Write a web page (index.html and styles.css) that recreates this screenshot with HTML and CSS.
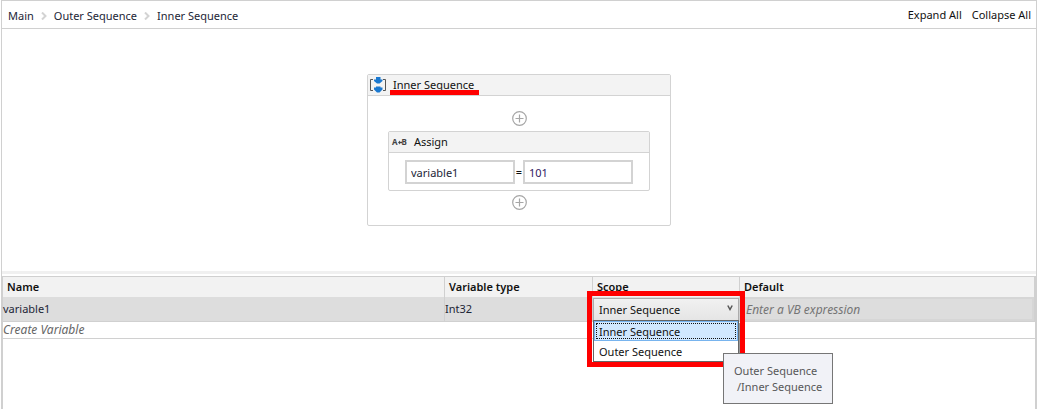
FILE: index.html
```html
<!DOCTYPE html>
<html lang="en">
<head>
<meta charset="utf-8">
<title>Workflow designer</title>
<link rel="stylesheet" href="styles.css">
</head>
<body>
<div class="designer">
  <header class="topbar">
    <nav class="crumbs" aria-label="Breadcrumb">
      <a href="#">Main</a>
      <svg class="chevron" viewBox="0 0 6 8"><path d="M1 0.5 4.5 4 1 7.5"/></svg>
      <a href="#">Outer Sequence</a>
      <svg class="chevron" viewBox="0 0 6 8"><path d="M1 0.5 4.5 4 1 7.5"/></svg>
      <a href="#">Inner Sequence</a>
    </nav>
    <div class="actions">
      <button type="button">Expand All</button>
      <button type="button">Collapse All</button>
    </div>
  </header>

  <main class="canvas">
    <section class="sequence">
      <h2 class="card-title">
        <svg class="seq-icon" viewBox="0 0 18 16">
          <path class="bracket" d="M3 2.500H0.500V13.500H3M13 2.500H15.500V13.500H13"/>
          <path class="arrow" d="M6 0H10.500V2.500H12.500V4L9.500 6.500H7L4 4V2.500H6ZM6 9.500H10.500V10.500H12.500V12.500L9.500 15.500H7L4 12.500V10.500H6Z"/>
        </svg>
        <span class="marked">Inner Sequence</span>
      </h2>
      <div class="sequence-body">
        <button type="button" class="add" aria-label="Add activity before"><svg viewBox="0 0 15 15"><circle cx="7.500" cy="7.500" r="6.800"/><path d="M7.500 3.500V11.500M3.500 7.500H11.500"/></svg></button>
        <section class="assign">
          <h3 class="card-title assign-title"><span class="ab-icon">A<svg viewBox="0 0 5 5"><path d="M0 2.500 2.500 0V1.500H5V3.500H2.500V5Z"/></svg>B</span>Assign</h3>
          <div class="assign-body">
            <input type="text" value="variable1" aria-label="To">
            <span class="equals">=</span>
            <input type="text" class="value" value="101" aria-label="Value">
          </div>
        </section>
        <button type="button" class="add" aria-label="Add activity after"><svg viewBox="0 0 15 15"><circle cx="7.500" cy="7.500" r="6.800"/><path d="M7.500 3.500V11.500M3.500 7.500H11.500"/></svg></button>
      </div>
    </section>
  </main>

  <div class="splitter"></div>

  <section class="variables">
    <table>
      <colgroup><col><col class="col-type"><col class="col-scope"><col class="col-default"></colgroup>
      <thead>
        <tr><th>Name</th><th>Variable type</th><th>Scope</th><th>Default</th></tr>
      </thead>
      <tbody>
        <tr class="selected">
          <td>variable1</td>
          <td>Int32</td>
          <td class="scope-cell">
            <div class="combo">
              <select aria-label="Scope"><option>Inner Sequence</option><option>Outer Sequence</option></select>
              <svg class="combo-arrow" viewBox="0 0 6 6"><path d="M0.800 0.500 3 4.500 5.200 0.500"/></svg>
            </div>
            <ul class="menu">
              <li class="active">Inner Sequence</li>
              <li>Outer Sequence</li>
            </ul>
            <div class="highlight"></div>
            <div class="tooltip" role="tooltip">Outer Sequence<br><span>/Inner Sequence</span></div>
          </td>
          <td class="default-cell"><input type="text" placeholder="Enter a VB expression" aria-label="Default"></td>
        </tr>
        <tr class="create"><td colspan="4">Create Variable</td></tr>
      </tbody>
    </table>
  </section>
</div>
</body>
</html>
```
FILE: styles.css
```css
* { box-sizing: border-box; }

body {
  margin: 0;
  background: #fff;
  color: #111;
  font: 11px/16px "Noto Sans", "Open Sans", sans-serif;
}

button, input, select { font: inherit; color: inherit; }

.designer {
  display: flex;
  flex-direction: column;
  min-height: 100vh;
  margin: 0 1px;
  border: 1px solid #d0d0d0;
  border-bottom: 0;
}

.topbar {
  display: flex;
  justify-content: space-between;
  align-items: center;
  height: 28px;
  padding: 0 5px 0 6px;
  border-bottom: 1px solid #d0d0d0;
}

.crumbs { display: flex; align-items: center; gap: 7px; padding-top: 2px; }
.crumbs a { color: #1c2536; text-decoration: none; }
.chevron { width: 6px; height: 8px; fill: none; stroke: #d3d3d3; stroke-width: 2; }

.actions { display: flex; gap: 10px; }
.actions button { padding: 0; border: 0; background: none; }

.canvas {
  display: flex;
  justify-content: center;
  padding: 45px 0;
}

.sequence {
  width: 304px;
  border: 1px solid #d3d3d3;
  border-radius: 2px;
}

.card-title {
  display: flex;
  align-items: center;
  height: 21px;
  margin: 0;
  padding: 0 2px;
  border-bottom: 1px solid #d3d3d3;
  background: #f3f3f3;
  font-size: 11px;
  font-weight: 400;
}

.seq-icon { width: 18px; height: 16px; margin-right: 5px; }
.bracket { fill: none; stroke: #555; stroke-width: 1; }
.arrow { fill: #1a78d0; }

.marked { position: relative; }
.marked::after {
  content: "";
  position: absolute;
  left: -3px;
  right: -5px;
  top: 13px;
  height: 5px;
  background: #f00;
}

.sequence-body {
  display: flex;
  flex-direction: column;
  align-items: center;
  padding: 15px 20px;
}

.add { display: block; padding: 0; border: 0; background: none; }
.add svg { display: block; width: 15px; height: 15px; fill: none; stroke: #a6a6a6; stroke-width: 1.2; }

.assign {
  align-self: stretch;
  margin: 5px 0 4px;
  border: 1px solid #d3d3d3;
  border-radius: 2px;
}

.assign-title { padding: 0 3px; gap: 7px; }

.ab-icon {
  display: flex;
  align-items: center;
  color: #444;
  font-size: 8px;
  font-weight: 700;
}
.ab-icon svg { width: 4px; height: 5px; fill: #444; }

.assign-body {
  display: flex;
  align-items: center;
  padding: 7px 16px 6px;
}

.assign-body input {
  flex: 1;
  min-width: 0;
  height: 24px;
  padding: 0 4px;
  border: 2px solid #d3d3d3;
  background: #fff;
  color: #1c2536;
}
.assign-body .value { color: #302060; }

.equals { width: 8px; text-align: center; }

.splitter { height: 3px; margin-bottom: 2px; background: #f0f0f0; }

.variables {
  flex: 1;
  border: 1px solid #d0d0d0;
  border-width: 1px 1px 0;
}

table {
  width: 100%;
  border-collapse: separate;
  border-spacing: 0;
  table-layout: fixed;
}

.col-type { width: 148px; }
.col-scope { width: 147px; }
.col-default { width: 295px; }

th {
  height: 20px;
  padding: 0 4px;
  border-right: 1px solid #d0d0d0;
  background: #f2f2f2;
  text-align: left;
  font-weight: 600;
}

td {
  height: 17px;
  padding: 0;
  border-bottom: 1px solid #d0d0d0;
}

.selected td {
  height: 25px;
  border-right: 1px solid #d0d0d0;
  background: #ddd;
  color: #1c2536;
}
.selected .scope-cell { position: relative; color: #111; vertical-align: top; }
.create td { color: #666; font-size: 12px; font-style: italic; }

.combo { position: relative; margin-top: 1px; }
.combo select {
  display: block;
  width: 100%;
  height: 23px;
  padding: 0 5px;
  border: 1px solid #acacac;
  border-radius: 0;
  background: linear-gradient(#f1f1f1, #e5e5e5);
  appearance: none;
}
.combo-arrow {
  position: absolute;
  right: 6px;
  top: 7px;
  width: 6px;
  height: 6px;
  fill: none;
  stroke: #555;
  stroke-width: 1.5;
  pointer-events: none;
}

.menu {
  position: absolute;
  z-index: 1;
  top: 23px;
  left: 0;
  right: 0;
  margin: 0;
  border: 1px solid #666;
  padding: 0;
  background: #fff;
  box-shadow: 4px 3px 0 #999;
  list-style: none;
}
.menu li { height: 20px; padding: 2px 4px 0; border: 1px solid transparent; }
.menu .active {
  border-color: #78b4ee;
  background: #d1e8ff;
  outline: 1px dotted #111;
  outline-offset: -3px;
}

.highlight {
  position: absolute;
  z-index: 2;
  top: -6px;
  left: -6px;
  right: -6px;
  height: 76px;
  border: 5px solid #f00;
  pointer-events: none;
}

.tooltip {
  position: absolute;
  z-index: 3;
  top: 56px;
  left: 130px;
  padding: 9px 10px 8px;
  border: 1px solid #767676;
  background: #f1f2f7;
  color: #575757;
  white-space: nowrap;
}
.tooltip span { padding-left: 3px; }

.default-cell input {
  display: block;
  width: 100%;
  height: 24px;
  padding: 0 4px;
  border: 2px solid #d6d6d6;
  background: #ddd;
  font-size: 12px;
  font-style: italic;
}
.default-cell input::placeholder { color: #757575; opacity: 1; }
```
